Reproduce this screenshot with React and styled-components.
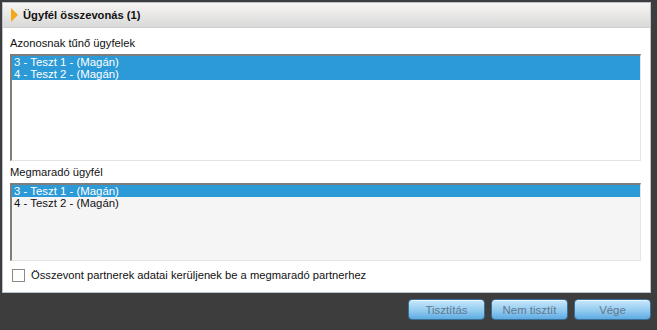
import React from 'react'
import styled, { createGlobalStyle } from 'styled-components'

const GlobalStyle = createGlobalStyle`
    html, body {
        margin: 0;
        padding: 0;
        background: #3d3d3d;
        width: 657px;
        height: 330px;
        overflow: hidden;
    }
    body {
        font-family: "Liberation Sans", Arial, sans-serif;
        font-size: 11.2px;
        color: #111;
    }
`;

const Screen = styled.div`
    display: flex;
    flex-direction: column;
    width: 657px;
    height: 330px;
    padding: 2px 6px 0 2px;
    box-sizing: border-box;
`;

const Dialog = styled.div`
    display: flex;
    flex-direction: column;
    background: #fff;
    border: 1px solid #b9c2cf;
    height: 291px;
    box-sizing: border-box;
`;

const Header = styled.div`
    display: flex;
    align-items: center;
    gap: 5px;
    height: 24px;
    padding-left: 8px;
    background: linear-gradient(#f6f5f3, #d9d9d9);
    border-bottom: 1px solid #cfcfcf;
    font-weight: bold;
    color: #111;
`;

const Arrow = styled.span`
    width: 0;
    height: 0;
    border-top: 7px solid transparent;
    border-bottom: 7px solid transparent;
    border-left: 7px solid #f3a81b;
`;

const Body = styled.div`
    display: flex;
    flex-direction: column;
    padding: 8px 9px 0 7px;
`;

const Label = styled.div`
    height: 14px;
    line-height: 14px;
    margin-bottom: 4px;
`;

const List = styled.div`
    display: flex;
    flex-direction: column;
    height: ${p => p.$h}px;
    background: ${p => p.$bg};
    border-top: 2px solid #7d7d7d;
    border-left: 2px solid #7d7d7d;
    border-right: 1px solid #e4e4e4;
    border-bottom: 1px solid #e4e4e4;
    box-sizing: border-box;
    margin-bottom: ${p => p.$mb}px;
`;

const Row = styled.div`
    height: 12px;
    line-height: 12px;
    padding-left: 2px;
    white-space: nowrap;
    font-size: 11.4px;
    color: ${p => (p.$selected ? '#fff' : '#111')};
    background: ${p => (p.$selected ? '#2b9ad6' : 'transparent')};
`;

const CheckRow = styled.label`
    display: flex;
    align-items: center;
    gap: 6px;
    height: 16px;
`;

const Box = styled.span`
    width: 11px;
    height: 11px;
    border: 1px solid #8a8a8a;
    background: #fff;
    margin-left: 2px;
`;

const Footer = styled.div`
    display: flex;
    justify-content: flex-end;
    gap: 6px;
    padding: 6px 0 0 0;
`;

const Button = styled.button`
    width: 77px;
    height: 21px;
    border: 1px solid #3a6f98;
    border-radius: 4px;
    background: linear-gradient(#c8e8fc, #92cbf0 55%, #5eabe2);
    color: #62778b;
    font-family: "Liberation Sans", Arial, sans-serif;
    font-size: 11.4px;
    padding: 0;
    box-shadow: inset 0 1px 0 rgba(255, 255, 255, 0.6);
`;

const App = () => {
    return (
        <>
            <GlobalStyle />
            <Screen>
                <Dialog>
                    <Header>
                        <Arrow />
                        Ügyfél összevonás (1)
                    </Header>
                    <Body>
                        <Label>Azonosnak tűnő ügyfelek</Label>
                        <List $h={107} $bg="#fff" $mb={4}>
                            <Row $selected>3 - Teszt 1 - (Magán)</Row>
                            <Row $selected>4 - Teszt 2 - (Magán)</Row>
                        </List>
                        <Label>Megmaradó ügyfél</Label>
                        <List $h={78} $bg="#f5f5f5" $mb={6}>
                            <Row $selected>3 - Teszt 1 - (Magán)</Row>
                            <Row>4 - Teszt 2 - (Magán)</Row>
                        </List>
                        <CheckRow>
                            <Box />
                            Összevont partnerek adatai kerüljenek be a megmaradó partnerhez
                        </CheckRow>
                    </Body>
                </Dialog>
                <Footer>
                    <Button>Tisztítás</Button>
                    <Button>Nem tisztít</Button>
                    <Button>Vége</Button>
                </Footer>
            </Screen>
        </>
    )
}

export default App
